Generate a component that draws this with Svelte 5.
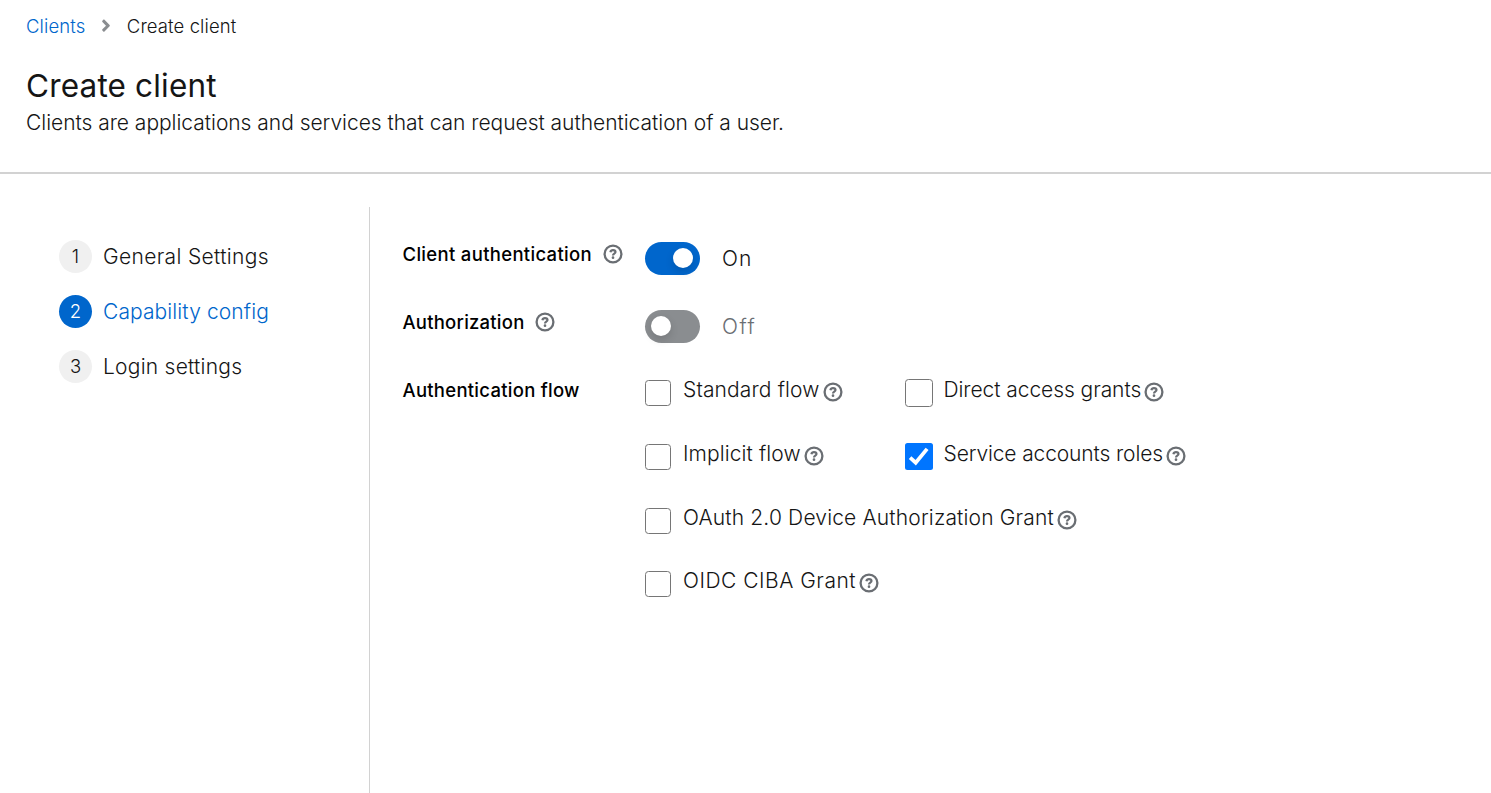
<script>
  const steps = [
    { label: 'General Settings', tracking: 0.34 },
    { label: 'Capability config', tracking: 0.1 },
    { label: 'Login settings', tracking: 0.24 }
  ];
  const current = 1;

  const flowRows = [
    [
      { label: 'Standard flow', tracking: 0.13 },
      { label: 'Direct access grants', tracking: -0.07 }
    ],
    [
      { label: 'Implicit flow', tracking: 0.09 },
      { label: 'Service accounts roles', tracking: -0.13, checked: true }
    ],
    [{ label: 'OAuth 2.0 Device Authorization Grant', tracking: 0.16 }],
    [{ label: 'OIDC CIBA Grant', tracking: 0.5 }]
  ];
</script>

{#snippet help()}
  <svg class="help" viewBox="0 0 20 20" aria-hidden="true">
    <circle cx="10" cy="10" r="8.4" fill="none" stroke="currentColor" stroke-width="2.3" />
    <path d="M7.4 8.2C7.7 6.8 8.7 6.2 10 6.2C11.5 6.2 12.5 7 12.5 8.1C12.5 9.8 10 9.6 10 11.5" fill="none" stroke="currentColor" stroke-width="2.2" />
    <circle cx="10" cy="13.7" r="1.35" fill="currentColor" />
  </svg>
{/snippet}

<div class="page">
  <header>
    <nav class="breadcrumb">
      <a href="#clients">Clients</a>
      <svg class="chevron" viewBox="0 0 256 512" aria-hidden="true">
        <path fill="currentColor" d="M224.3 273l-136 136c-9.4 9.4-24.6 9.4-33.9 0l-22.6-22.6c-9.4-9.4-9.4-24.6 0-33.9l96.4-96.4-96.4-96.4c-9.4-9.4-9.4-24.6 0-33.9L54.3 103c9.4-9.4 24.6-9.4 33.9 0l136 136c9.5 9.4 9.5 24.6.1 34z" />
      </svg>
      <span>Create client</span>
    </nav>
    <h1>Create client</h1>
    <p>Clients are applications and services that can request authentication of a user.</p>
  </header>

  <div class="wizard">
    <ol class="steps">
      {#each steps as step, i}
        <li class:current={i === current}>
          <span class="number">{i + 1}</span>
          <span style:letter-spacing="{step.tracking}px">{step.label}</span>
        </li>
      {/each}
    </ol>

    <form>
      <div class="group">
        <div class="name"><span>Client authentication</span>{@render help()}</div>
        <div class="switch on"><span class="track"><span class="knob"></span></span><span class="state">On</span></div>
      </div>
      <div class="group">
        <div class="name"><span class="authz">Authorization</span>{@render help()}</div>
        <div class="switch"><span class="track"><span class="knob"></span></span><span class="state">Off</span></div>
      </div>
      <div class="group">
        <div class="name"><span class="flow-name">Authentication flow</span></div>
        <div class="flows">
          {#each flowRows as row}
            <div class="row">
              {#each row as flow}
                <div class="option">
                  <span class="box" class:checked={flow.checked}>
                    {#if flow.checked}
                      <svg viewBox="0 0 28 28" aria-hidden="true">
                        <path d="M5.2 14.8L10.9 20.1L22.5 6" fill="none" stroke="#fff" stroke-width="3.8" />
                      </svg>
                    {/if}
                  </span>
                  <span class="label" style:letter-spacing="{flow.tracking}px">{flow.label}</span>
                  {@render help()}
                </div>
              {/each}
            </div>
          {/each}
        </div>
      </div>
    </form>
  </div>
</div>

<style>
  :global(body) {
    background: #fff;
    overflow: hidden;
  }
  .page {
    box-sizing: border-box;
    height: 793px;
    display: flex;
    flex-direction: column;
    color: #151515;
    font: 300 21px/32px Inter, sans-serif;
    white-space: nowrap;
  }
  header {
    box-sizing: border-box;
    height: 174px;
    padding: 12px 26px 0;
    border-bottom: 2px solid #d2d2d2;
  }
  .breadcrumb {
    display: flex;
    align-items: center;
    height: 27px;
    font-size: 18.5px;
    letter-spacing: 0.1px;
  }
  .breadcrumb a {
    color: #06c;
    text-decoration: none;
  }
  .chevron {
    width: 10px;
    height: 19.25px;
    margin: 0 16px 0 15.5px;
    color: #8a8d90;
  }
  h1 {
    margin: 26px 0 0;
    font-size: 31.5px;
    line-height: 42px;
    font-weight: 400;
    letter-spacing: 0.17px;
  }
  p {
    margin: 0;
    letter-spacing: -0.03px;
  }
  .wizard {
    flex: 1;
    display: flex;
    padding-top: 33px;
  }
  .steps {
    box-sizing: border-box;
    width: 370px;
    margin: 0;
    padding: 33px 0 0 59px;
    border-right: 1px solid #d2d2d2;
    list-style: none;
    display: flex;
    flex-direction: column;
    gap: 22px;
  }
  .steps li {
    display: flex;
    align-items: center;
    gap: 11px;
    height: 33px;
  }
  .number {
    width: 33px;
    height: 33px;
    border-radius: 50%;
    background: #f0f0f0;
    font-size: 18.5px;
    line-height: 33px;
    text-align: center;
  }
  .current {
    color: #06c;
  }
  .current .number {
    background: #06c;
    color: #fff;
  }
  form {
    padding: 33px 0 0 32.5px;
  }
  .group {
    display: flex;
    height: 68px;
  }
  .name {
    width: 242.5px;
    height: 28px;
    display: flex;
    align-items: center;
    gap: 10.5px;
    color: #000;
    font-size: 18.5px;
    font-weight: 500;
    letter-spacing: 0.32px;
  }
  .authz {
    letter-spacing: 0.23px;
  }
  .flow-name {
    letter-spacing: 0.27px;
  }
  .help {
    flex: none;
    width: 20px;
    height: 20px;
    color: #6a6e73;
  }
  .switch {
    display: flex;
    align-items: center;
    gap: 22px;
    height: 37px;
    color: #6a6e73;
  }
  .track {
    box-sizing: border-box;
    width: 55px;
    height: 33px;
    padding: 0 7px 1px 6px;
    border-radius: 17px;
    background: #8a8d90;
    display: flex;
    align-items: center;
  }
  .knob {
    width: 20px;
    height: 20px;
    border-radius: 50%;
    background: #fff;
    box-shadow: 0 4px 8px rgba(3, 3, 3, 0.14);
  }
  .on {
    color: #151515;
  }
  .on .track {
    background: #06c;
    justify-content: flex-end;
  }
  .state {
    letter-spacing: 1.5px;
  }
  .on .state {
    letter-spacing: 1.1px;
  }
  .row {
    display: flex;
    height: 63.8px;
  }
  .option {
    width: 260px;
    display: flex;
    align-items: flex-start;
  }
  .box {
    box-sizing: border-box;
    flex: none;
    width: 26px;
    height: 26px;
    margin: 4px 12px 0 0;
    border: 1.4px solid #767676;
    border-radius: 3.5px;
    background: #fff;
  }
  .option + .option .box {
    width: 27.5px;
    height: 27.5px;
    margin: 3px 11px 0 0;
  }
  .option .checked {
    border: 0;
    border-radius: 2.5px;
    background: #0075ff;
  }
  .box svg {
    display: block;
    width: 27.5px;
    height: 27.5px;
  }
  .label {
    line-height: 28px;
  }
  .option .help {
    margin: 6px 0 0 3px;
  }
</style>
